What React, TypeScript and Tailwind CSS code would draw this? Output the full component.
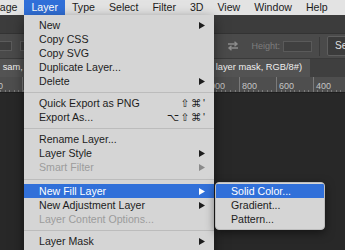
import React from 'react';

type Item =
  | { kind: 'sep'; h?: string }
  | { kind: 'item'; label: string; shortcut?: string; arrow?: boolean; disabled?: boolean; active?: boolean };

const menuItems: Item[] = [
  { kind: 'item', label: 'New', arrow: true },
  { kind: 'item', label: 'Copy CSS' },
  { kind: 'item', label: 'Copy SVG' },
  { kind: 'item', label: 'Duplicate Layer...' },
  { kind: 'item', label: 'Delete', arrow: true },
  { kind: 'sep' },
  { kind: 'item', label: 'Quick Export as PNG', shortcut: "⇧⌘'" },
  { kind: 'item', label: 'Export As...', shortcut: "⌥⇧⌘'" },
  { kind: 'sep' },
  { kind: 'item', label: 'Rename Layer...' },
  { kind: 'item', label: 'Layer Style', arrow: true },
  { kind: 'item', label: 'Smart Filter', arrow: true, disabled: true },
  { kind: 'sep', h: 'tall' },
  { kind: 'item', label: 'New Fill Layer', arrow: true, active: true },
  { kind: 'item', label: 'New Adjustment Layer', arrow: true },
  { kind: 'item', label: 'Layer Content Options...', disabled: true },
  { kind: 'sep' },
  { kind: 'item', label: 'Layer Mask', arrow: true },
  { kind: 'item', label: 'Vector Mask', arrow: true },
];

const topMenus = ['Image', 'Layer', 'Type', 'Select', 'Filter', '3D', 'View', 'Window', 'Help'];

const rulerMarks = [
  { label: '2200', w: 'w-[42px] ml-[-20px]' },
  { label: '2000', w: 'w-[36px]' },
  { label: '1800', w: 'w-[36px]' },
  { label: '1600', w: 'w-[36px]' },
  { label: '1400', w: 'w-[36px]' },
  { label: '1200', w: 'w-[36px]' },
  { label: '1000', w: 'w-[37px]' },
  { label: '800', w: 'w-[37px]' },
  { label: '600', w: 'w-[37px]' },
  { label: '400', w: 'w-[37px]' },
];

const Arrow: React.FC<{ light?: boolean }> = ({ light }) => (
  <svg width="6" height="7" viewBox="0 0 6 7" className="shrink-0">
    <polygon points="0,0 6,3.5 0,7" fill={light ? '#ffffff' : '#1c1c1c'} />
  </svg>
);

const MenuRow: React.FC<{ item: Extract<Item, { kind: 'item' }> }> = ({ item }) => {
  const color = item.active ? 'text-white' : item.disabled ? 'text-[#9c9c9c]' : 'text-[#1c1c1c]';
  return (
    <div className={`flex h-[14px] items-center pl-[15px] pr-[9px] ${item.active ? 'bg-[#3170d9]' : ''} ${color}`}>
      <span className="flex-1 whitespace-nowrap">{item.label}</span>
      {item.shortcut && <span className="mr-[-1.5px] whitespace-nowrap tracking-[1.5px]">{item.shortcut}</span>}
      {item.arrow && (item.disabled ? <span className="opacity-40"><Arrow /></span> : <Arrow light={item.active} />)}
    </div>
  );
};

export default function App() {
  return (
    <div className="relative flex h-[250px] w-[345px] flex-col overflow-hidden bg-[#282828] font-['Liberation_Sans','DejaVu_Sans',sans-serif] text-[10.6px] leading-none">
      {/* mac menu bar */}
      <div className="flex h-[15px] shrink-0 items-center bg-[#e3e3e3] text-[#1c1c1c]">
        {topMenus.map((m, i) => (
          <div
            key={m}
            className={`flex h-full items-center px-[7px] whitespace-nowrap ${i === 0 ? 'ml-[-19px]' : ''} ${m === 'Layer' ? 'bg-[#3170d9] text-white' : ''}`}
          >
            {m}
          </div>
        ))}
      </div>

      {/* app title strip */}
      <div className="h-[18px] shrink-0 bg-[#3c3c3c]" />

      {/* options bar */}
      <div className="flex h-[25px] shrink-0 items-center border-t border-[#333] bg-[#4a4a4a]">
        <div className="ml-[-2px] h-[10px] w-[14px] shrink-0 border border-[#5c5c5c] bg-[#3e3e3e]" />
        <div className="ml-[8px] h-[10px] w-[10px] shrink-0 border border-[#5c5c5c] bg-[#3e3e3e]" />
        <div className="flex-1" />
        <div className="mr-[-40px] flex shrink-0 items-center">
          <svg width="12" height="10" viewBox="0 0 12 10" className="mr-[12px]">
            <path d="M1 3h9M7.5 0.8L10 3 7.5 5.2M11 7H2M4.5 4.8L2 7l2.5 2.2" stroke="#8c8c8c" strokeWidth="1.4" fill="none" />
          </svg>
          <span className="text-[9px] text-[#7d7d7d]">Height:</span>
          <div className="ml-[3px] h-[11px] w-[29px] border border-[#5a5a5a] bg-[#404040]" />
          <div className="ml-[7px] h-[19px] w-px bg-[#3a3a3a]" />
          <div className="ml-[7px] flex h-[20px] w-[58px] items-center overflow-hidden rounded-[2px] border border-[#5e5e5e] bg-[#3b3b3b] pl-[7px] text-[10px] whitespace-nowrap text-[#e0e0e0]">
            Select and Mask...
          </div>
        </div>
      </div>

      {/* document tab */}
      <div className="flex h-[19px] shrink-0 border-t border-[#3a3a3a] bg-[#3f3f3f]">
        <div className="flex w-[310px] items-center justify-end overflow-hidden bg-[#535353] pr-[8px] text-[9.3px] whitespace-nowrap text-[#efefef]">
          Untitled-1 @ 66.7% (Ellipse 1, sam, sky, layer 0 copy, Curves 2, Hue/Saturation 1, layer mask, RGB/8#)
        </div>
      </div>

      {/* ruler */}
      <div className="relative flex h-[16px] shrink-0 border-b border-[#1e1e1e] bg-[#4e4e4e]">
        {rulerMarks.map((r) => (
          <div key={r.label} className={`${r.w} shrink-0 border-l border-[#7a7a7a] pt-[5px] pl-[2px] text-[9px] text-[#c4c4c4]`}>
            {r.label}
          </div>
        ))}
        <div className="absolute right-0 bottom-0 left-0 h-[2px] bg-[repeating-linear-gradient(90deg,#7a7a7a_0_1px,transparent_1px_4.6px)]" />
      </div>

      {/* canvas */}
      <div className="flex-1 bg-[#282828]" />

      {/* Layer dropdown */}
      <div className="absolute top-[15px] left-[24px] w-[190px] bg-[#d5d5d5] pt-[3px] shadow-[0_4px_12px_rgba(0,0,0,0.5)]">
        {menuItems.map((it, i) =>
          it.kind === 'sep' ? (
            <div key={i} className={`flex items-center ${it.h === 'tall' ? 'h-[10px]' : 'h-[8px]'}`}>
              <div className="h-px w-full bg-[#bcbcbc]" />
            </div>
          ) : (
            <MenuRow key={i} item={it} />
          )
        )}
      </div>

      {/* New Fill Layer submenu */}
      <div className="absolute top-[182px] left-[215px] w-[110px] overflow-hidden rounded-[4px] border border-[#bdbdbd] bg-[#d5d5d5] pt-[1px] pb-[3px] shadow-[0_3px_10px_rgba(0,0,0,0.5)]">
        <div className="flex h-[14px] items-center bg-[#3170d9] pl-[15px] text-white">Solid Color...</div>
        <div className="flex h-[14px] items-center pl-[15px] text-[#1c1c1c]">Gradient...</div>
        <div className="flex h-[14px] items-center pl-[15px] text-[#1c1c1c]">Pattern...</div>
      </div>
    </div>
  );
}
